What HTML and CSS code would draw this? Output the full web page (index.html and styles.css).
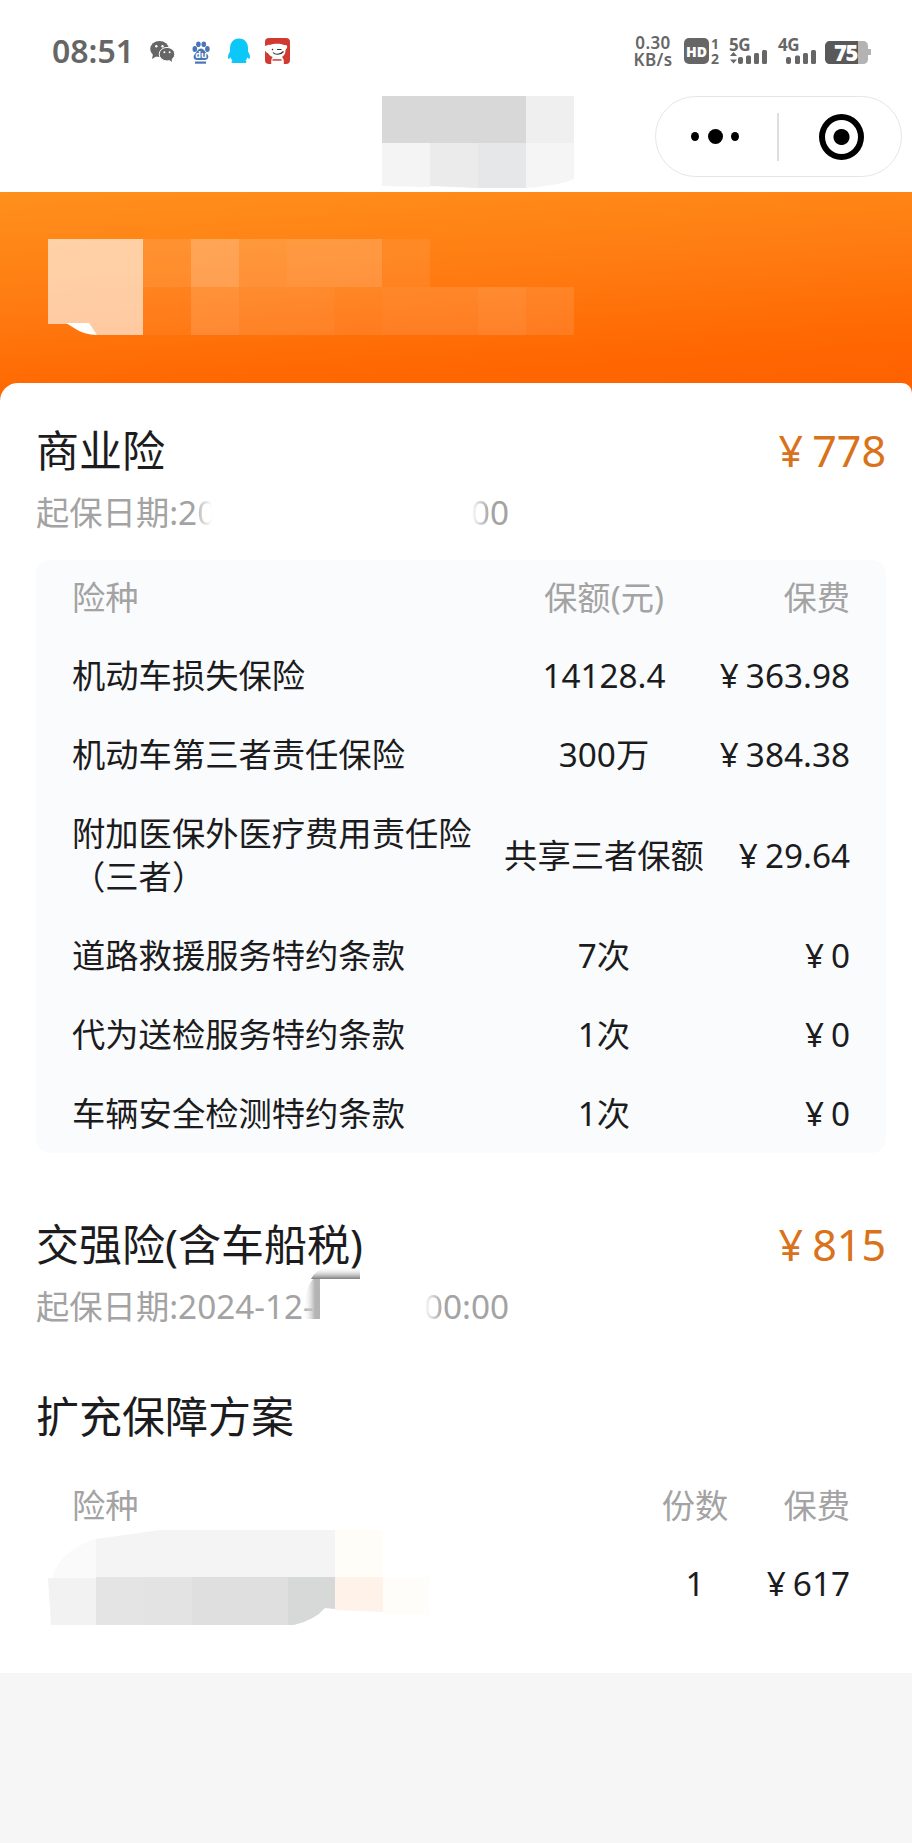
FILE: index.html
```html
<!DOCTYPE html>
<html lang="zh-CN">
<head>
  <meta charset="UTF-8">
  <title>保单详情</title>
  <link rel="stylesheet" href="styles.css">
</head>
<body>
  <!-- 状态栏 -->
  <div class="status">
    <div class="time">08:51</div>
    <svg class="apps" width="142" height="30" viewBox="150 36 142 30">
      <!-- 微信 -->
      <g fill="#666">
        <ellipse cx="159.5" cy="49" rx="9.3" ry="8"/>
        <path d="M153 54l-1 5 5-3z"/>
        <ellipse cx="167" cy="54.2" rx="7.8" ry="6.8" stroke="#fff" stroke-width="1"/>
        <path d="M168 59l4 3-.5-5z"/>
      </g>
      <g fill="#fff">
        <circle cx="156.3" cy="46.3" r="1.2"/><circle cx="162.5" cy="46.3" r="1.2"/>
        <circle cx="164.4" cy="52.3" r="1"/><circle cx="169.6" cy="52.3" r="1"/>
      </g>
      <!-- 百度 -->
      <g fill="#4a76b8">
        <ellipse cx="194.8" cy="49" rx="2.3" ry="3"/>
        <ellipse cx="198.4" cy="44.3" rx="2.3" ry="2.8"/>
        <ellipse cx="203.8" cy="44.3" rx="2.3" ry="2.8"/>
        <ellipse cx="207.4" cy="49" rx="2.3" ry="3"/>
        <path d="M201 48.500c3 0 4.500 4 6.500 6 2 2.500 0 5.500-2.500 5.500h-8c-3 0-4.500-3-2.500-5.500 2-2 3.500-6 6.500-6z"/>
        <rect x="195" y="61.500" width="11" height="2.200"/>
      </g>
      <text class="du" x="201" y="58.200">du</text>
      <!-- QQ -->
      <path fill="#0cc8f8" d="M239 38.500c-6 0-9 4.500-9 10v3c-1.500 2-2.500 5-1.800 7 .8.800 1.800-.5 2.500-1.300.3 1.500 1 2.500 1.800 3.300-1.500.8-1.500 2.500.5 2.500h12c2 0 2-1.700.5-2.500.8-.8 1.500-1.800 1.800-3.300.7.8 1.700 2.100 2.500 1.300.7-2-.3-5-1.800-7v-3c0-5.500-3-10-9-10z"/>
      <!-- 京东 -->
      <rect x="265" y="38" width="25" height="26" rx="4" fill="#d03a30"/>
      <path fill="#fff" d="M265 46c2.500-.5 3.500-1.500 5-1 3-1.800 11-1.800 14 0 1.800-.3 3.200.2 3.200 1.800s-1.200 2.200-1.700 3.200c.3 3.500-1.500 5.500-3.500 7 1.500 1.500 2.200 3.500 1.800 7h-12.500c-.3-3 0-5.500 1.500-7-2.800-1-4-2.500-5-4-2.300-.5-2.800-2-2.800-4z"/>
      <path fill="#d03a30" d="M272.500 59.200h9v1.500h-9z"/>
      <path fill="none" stroke="#333" stroke-width="1.200" d="M273 52.500c2 2.500 7.500 2.500 10.500-1M277 49.500h4.500M272 49l1 1"/>
    </svg>
    <div class="net">
      <p>0.30</p>
      <p>KB/s</p>
    </div>
    <svg class="signals" width="190" height="34" viewBox="684 34 190 34">
      <rect x="684" y="38" width="25" height="26" rx="5" fill="#666"/>
      <text class="hd" x="696.500" y="57">HD</text>
      <g class="tiny">
        <text x="711" y="49">1</text>
        <text x="711" y="63.500">2</text>
      </g>
      <text class="gen" x="729" y="50.500">5G</text>
      <text class="gen" x="778" y="50.500">4G</text>
      <g fill="#666">
        <path d="M730 56l3.500-4 3.500 4zM730 59.500h7l-3.500 4z"/>
        <rect x="738" y="57" width="5" height="7" rx="2"/>
        <rect x="746" y="55.500" width="5" height="8.500" rx="1.500"/>
        <rect x="754" y="53" width="5" height="11" rx="1.500"/>
        <rect x="762" y="50" width="5" height="14" rx="1.500"/>
        <rect x="786" y="57" width="5" height="7" rx="2"/>
        <rect x="795" y="55.500" width="5" height="8.500" rx="1.500"/>
        <rect x="803" y="53" width="5" height="11" rx="1.500"/>
        <rect x="811" y="50" width="5" height="14" rx="1.500"/>
      </g>
      <!-- 电量 -->
      <path fill="#b3b3b3" d="M856 41h7c3 0 5 2 5 5v3h3v6h-3v4c0 3-2 5-5 5h-7z"/>
      <path fill="#595959" d="M830 41h28v23h-28c-3 0-5-2-5-5v-13c0-3 2-5 5-5z"/>
      <text class="battery" x="834" y="60.500">75</text>
    </svg>
  </div>

  <!-- 导航栏 -->
  <div class="nav">
    <svg class="nav-title" width="194" height="96" viewBox="382 96 194 96">
      <path fill="#d8d8d8" d="M382 96h144v47h-144z"/>
      <path fill="#efefef" d="M526 96h48v47h-48z"/>
      <path fill="#f4f4f4" d="M382 143h48v44l-48-1z"/>
      <path fill="#ebebeb" d="M430 143h48v45l-48-2z"/>
      <path fill="#e6e7e8" d="M478 143h48v45h-48z"/>
      <path fill="#f5f5f6" d="M526 143h48v36q-16 7-48 9z"/>
    </svg>
    <div class="capsule">
      <div class="dots"><i></i><i class="big"></i><i></i></div>
      <div class="line"></div>
      <div class="target"></div>
    </div>
  </div>

  <div class="banner">
    <svg width="912" height="215" viewBox="0 192 912 215">
      <g fill="#fff">
        <path opacity=".62" d="M48 239h95v96H97q-14-5-22-11H48z"/>
        <path d="M66 323h23l8 12q-13 0-23-7z"/>
        <path opacity=".11" d="M143 239h48v48h-48z"/>
        <path opacity=".27" d="M191 239h48v48h-48z"/>
        <path opacity=".16" d="M239 239h48v48h-48z"/>
        <path opacity=".19" d="M287 239h95v48h-95z"/>
        <path opacity=".07" d="M382 239h48v48h-48z"/>
        <path opacity=".05" d="M143 287h48v48h-48z"/>
        <path opacity=".17" d="M191 287h48v48h-48z"/>
        <path opacity=".12" d="M239 287h95v48h-95z"/>
        <path opacity=".09" d="M334 287h48v48h-48z"/>
        <path opacity=".11" d="M382 287h96v48h-96z"/>
        <path opacity=".14" d="M478 287h48v48h-48z"/>
        <path opacity=".1" d="M526 287h48v48h-48z"/>
      </g>
    </svg>
  </div>

  <div class="content">
    <!-- 商业险 -->
    <div class="title">
      <span>商业险</span>
      <span class="price"><span class="yen">¥</span>778</span>
    </div>
    <div class="date">
      <span>起保日期:2<span class="fade-right">0</span></span>
      <span><span class="fade-left">0</span>0</span>
    </div>
    <div class="table">
      <div class="row head"><div>险种</div><div>保额(元)</div><div>保费</div></div>
      <div class="row"><div>机动车损失保险</div><div>14128.4</div><div><span class="yen">¥</span>363.98</div></div>
      <div class="row"><div>机动车第三者责任保险</div><div>300万</div><div><span class="yen">¥</span>384.38</div></div>
      <div class="row"><div>附加医保外医疗费用责任险（三者）</div><div>共享三者保额</div><div><span class="yen">¥</span>29.64</div></div>
      <div class="row"><div>道路救援服务特约条款</div><div>7次</div><div><span class="yen">¥</span>0</div></div>
      <div class="row"><div>代为送检服务特约条款</div><div>1次</div><div><span class="yen">¥</span>0</div></div>
      <div class="row"><div>车辆安全检测特约条款</div><div>1次</div><div><span class="yen">¥</span>0</div></div>
    </div>

    <!-- 交强险 -->
    <div class="title second">
      <span>交强险(含车船税)</span>
      <span class="price"><span class="yen">¥</span>815</span>
    </div>
    <div class="date">
      <span>起保日期:2024-12-</span>
      <span><span class="fade-left">0</span>0:00</span>
      <svg class="smudge" width="60" height="54" viewBox="0 0 60 54">
        <defs>
          <linearGradient id="up" x1="0" y1="0" x2="0" y2="1">
            <stop offset="0" stop-color="#fff" stop-opacity="0"/>
            <stop offset="1" stop-color="#7c7c7c"/>
          </linearGradient>
          <linearGradient id="side">
            <stop offset="0" stop-color="#fff" stop-opacity="0"/>
            <stop offset=".7" stop-color="#b4b4b4"/>
          </linearGradient>
        </defs>
        <path fill="url(#side)" d="M1 52q1-30 10-40h7v40z"/>
        <path fill="#fff" d="M18 12h14v40h-14z"/>
        <path fill="url(#up)" d="M9 12q6-12 22-12h27v12z"/>
      </svg>
    </div>

    <!-- 扩充保障方案 -->
    <div class="title third">
      <span>扩充保障方案</span>
    </div>
    <div class="plan">
      <div class="row head"><div>险种</div><div>份数</div><div>保费</div></div>
      <div class="row">
        <div>
          <svg class="plan-name" width="384" height="96" viewBox="48 1530 384 96">
            <path fill="#fafafa" d="M52 1578q8-28 44-39v39z"/>
            <path fill="#f4f4f4" d="M96 1539l64-9h175v48H96z"/>
            <path fill="#f2f2f2" d="M48 1578h48v47H51z"/>
            <path fill="#e4e4e4" d="M96 1577h48v48H96z"/>
            <path fill="#e3e3e3" d="M144 1577h48v48h-48z"/>
            <path fill="#dfdfdf" d="M192 1577h96v48h-96z"/>
            <path fill="#d7d8d8" d="M288 1577h47v32l-10-1q-10 12-31 17h-6z"/>
            <path fill="#fffdf8" d="M335 1530h48v47h-48z"/>
            <path fill="#fff2e8" d="M335 1577h48v35l-48-2z"/>
            <path fill="#fffdfa" d="M383 1577h46v38h-46z"/>
          </svg>
        </div>
        <div>1</div>
        <div><span class="yen">¥</span>617</div>
      </div>
    </div>
  </div>
</body>
</html>
```
FILE: styles.css
```css
* {
  margin: 0;
  padding: 0;
  box-sizing: border-box;
}
body {
  background-color: #f6f6f6;
  color: #1c1c1e;
  font-family: "Noto Sans", "Noto Sans CJK SC", sans-serif;
  font-size: 33.3px;
}
svg {
  display: block;
}

/* 状态栏 */
.status {
  display: flex;
  height: 96px;
  padding-left: 52px;
  background-color: #fff;
  color: #666;
}
.time {
  width: 98px;
  padding-top: 27px;
  font-size: 32px;
  font-weight: 600;
  line-height: 48px;
}
.apps {
  margin-top: 36px;
}
.net {
  width: 46px;
  margin: 34px 8px 0 338px;
  font-size: 17px;
  font-weight: 600;
  line-height: 17px;
  letter-spacing: .4px;
  text-align: center;
}
.signals {
  margin-top: 34px;
}
.signals text {
  fill: #666;
  font-weight: bold;
}
.signals .hd {
  fill: #fff;
  font-size: 14px;
  font-weight: 900;
  text-anchor: middle;
}
.tiny {
  font-size: 14px;
}
.gen {
  font-size: 17px;
  letter-spacing: -.5px;
}
.signals .battery {
  fill: #fff;
  font-size: 22px;
  font-weight: 900;
  letter-spacing: -1.500px;
}
.du {
  fill: #fff;
  font-size: 9px;
  font-weight: bold;
  text-anchor: middle;
}

/* 导航栏 */
.nav {
  display: flex;
  justify-content: space-between;
  height: 96px;
  padding: 0 10px 0 382px;
  background-color: #fff;
}
.capsule {
  display: flex;
  align-items: center;
  width: 247px;
  height: 81px;
  border: 1px solid #e6e6e6;
  border-radius: 41px;
}
.dots {
  display: flex;
  align-items: center;
  justify-content: space-between;
  width: 48px;
  margin-left: 35px;
}
.dots i {
  width: 8px;
  height: 9px;
  border-radius: 50%;
  background-color: #000;
}
.dots .big {
  width: 15px;
  height: 15px;
}
.line {
  width: 2px;
  height: 48px;
  margin: 0 40px 0 38px;
  background-color: #dedede;
}
.target {
  width: 45px;
  height: 46px;
  border: 6px solid #000;
  border-radius: 50%;
  background: radial-gradient(circle, #000 7.500px, #fff 8.500px);
}

.banner {
  height: 215px;
  background: linear-gradient(176deg, #ff901c 0%, #ff7c12 40%, #ff6803 72%, #ff5f00 100%);
}

/* 内容 */
.content {
  height: 1290px;
  margin-top: -24px;
  padding: 36px 26px 0 36px;
  border-radius: 18px 10px 0 0;
  background-color: #fff;
}
.title {
  display: flex;
  justify-content: space-between;
  font-size: 43px;
  line-height: 64px;
}
.price {
  color: #d9721a;
}
.yen {
  margin-right: 7px;
}
.price .yen {
  margin-right: 9px;
}
.date {
  display: flex;
  justify-content: space-between;
  position: relative;
  width: 473px;
  margin-top: 5px;
  color: #a3a3a3;
  line-height: 48px;
}
.fade-right {
  color: transparent;
  background: linear-gradient(90deg, #bbb, #fff 80%);
  -webkit-background-clip: text;
  background-clip: text;
}
.fade-left {
  color: transparent;
  background: linear-gradient(270deg, #a3a3a3, #fff);
  -webkit-background-clip: text;
  background-clip: text;
}
/* 日期上的涂抹痕迹 */
.smudge {
  position: absolute;
  left: 266px;
  top: -15px;
}
.table {
  width: 850px;
  margin-top: 24px;
  border-radius: 14px;
  background-color: #fafbfc;
}
.row {
  display: grid;
  grid-template-columns: 432px 200px 146px;
  align-items: center;
  padding: 18px 36px;
  line-height: 43px;
}
.row div:first-child {
  padding-right: 28px;
}
.row div:nth-child(2) {
  text-align: center;
  white-space: nowrap;
}
.row div:nth-child(3) {
  text-align: right;
  white-space: nowrap;
}
.row.head {
  padding-top: 16px;
  padding-bottom: 17px;
  color: #a3a3a3;
}
.second {
  margin-top: 60px;
}
.third {
  margin-top: 55px;
}
.plan {
  width: 850px;
  margin-top: 19px;
}
.plan .row {
  grid-template-columns: 573px 100px 105px;
}
.plan-name {
  margin: -32px 0 -21px -24px;
}
```
